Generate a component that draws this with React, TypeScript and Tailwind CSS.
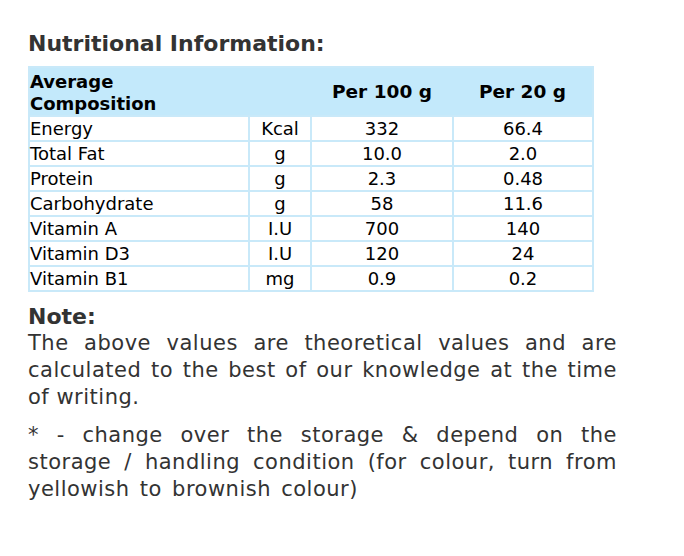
const rows = [
  ['Energy', 'Kcal', '332', '66.4'],
  ['Total Fat', 'g', '10.0', '2.0'],
  ['Protein', 'g', '2.3', '0.48'],
  ['Carbohydrate', 'g', '58', '11.6'],
  ['Vitamin A', 'I.U', '700', '140'],
  ['Vitamin D3', 'I.U', '120', '24'],
  ['Vitamin B1', 'mg', '0.9', '0.2'],
];

export default function App() {
  return (
    <div className="w-[684px] h-[556px] bg-white font-['DejaVu_Sans',Verdana,sans-serif]">
      <div className="pl-[28px] pt-[30px] w-[617px]">
        <h2 className="text-[22px] leading-[28px] font-bold text-[#333]">Nutritional Information:</h2>
        <table className="mt-[8px] w-[566px] border-collapse border-2 border-[#c9e9f9] text-black text-[18px]">
          <thead>
            <tr className="bg-[#c3e9fb] h-[49px]">
              <th className="w-[220px] text-left font-bold text-[18px] leading-[22px] px-0 pt-[2px]">
                Average
                <br />
                Composition
              </th>
              <th className="w-[62px]"></th>
              <th className="w-[142px] text-center font-bold text-[18.5px]">Per 100 g</th>
              <th className="text-center font-bold text-[18.5px]">Per 20 g</th>
            </tr>
          </thead>
          <tbody>
            {rows.map((r) => (
              <tr key={r[0]} className="h-[25px]">
                <td className="border-2 border-[#c9e9f9] px-0 leading-[21px]">{r[0]}</td>
                <td className="border-2 border-[#c9e9f9] text-center leading-[21px]">{r[1]}</td>
                <td className="border-2 border-[#c9e9f9] text-center leading-[21px]">{r[2]}</td>
                <td className="border-2 border-[#c9e9f9] text-center leading-[21px]">{r[3]}</td>
              </tr>
            ))}
          </tbody>
        </table>
        <p className="mt-[12px] text-[22px] leading-[26px] font-bold text-[#333]">Note:</p>
        <p className="text-[21px] leading-[27px] text-[#333] text-justify tracking-[0.5px]">
          The above values are theoretical values and are calculated to the best of our knowledge at the time of writing.
        </p>
        <p className="mt-[11px] text-[21px] leading-[27px] text-[#333] text-justify tracking-[0.5px] [word-spacing:3px]">
          * - change over the storage &amp; depend on the storage / handling condition (for colour, turn from yellowish to brownish colour)
        </p>
      </div>
    </div>
  );
}
